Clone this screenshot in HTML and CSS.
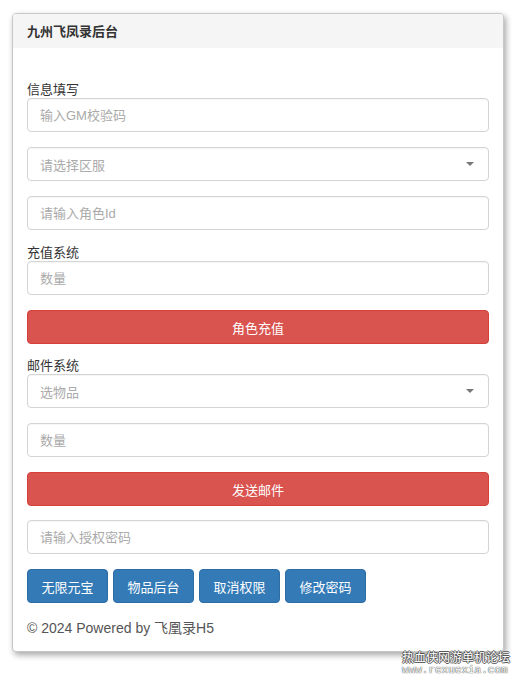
FILE: index.html
```html
<!DOCTYPE html>
<html lang="zh-CN">
<head>
<meta charset="utf-8">
<title>九州飞凤录后台</title>
<link rel="stylesheet" href="styles.css">
</head>
<body>
<div class="panel">
  <div class="panel-heading">九州飞凤录后台</div>
  <div class="panel-body">
    <label class="label">信息填写</label>
    <input class="field" type="text" placeholder="输入GM校验码">
    <div class="field select"><span>请选择区服</span><span class="caret"></span></div>
    <input class="field" type="text" placeholder="请输入角色Id">

    <label class="label">充值系统</label>
    <input class="field" type="text" placeholder="数量">
    <button class="btn-red">角色充值</button>

    <label class="label">邮件系统</label>
    <div class="field select"><span>选物品</span><span class="caret"></span></div>
    <input class="field" type="text" placeholder="数量">
    <button class="btn-red">发送邮件</button>

    <input class="field" type="text" placeholder="请输入授权密码">
    <div class="btn-row">
      <button class="btn-blue">无限元宝</button>
      <button class="btn-blue">物品后台</button>
      <button class="btn-blue">取消权限</button>
      <button class="btn-blue">修改密码</button>
    </div>
    <div class="footer">© 2024 Powered by 飞凰录H5</div>
  </div>
</div>
<div class="watermark">
  <div class="wm1">热血侠网游单机论坛</div>
  <div class="wm2">www.rexuexia.com</div>
</div>
</body>
</html>
```
FILE: styles.css
```css
html, body {
  margin: 0;
  padding: 0;
  background: #fff;
}
body {
  font-family: "Liberation Sans", "Noto Sans CJK SC", sans-serif;
  font-size: 13px;
  color: #333;
  padding: 13px 18px 0 12px;
  height: 685px;
  box-sizing: border-box;
  position: relative;
  overflow: hidden;
}
.panel {
  border: 1px solid #c8c8c8;
  border-radius: 4px;
  box-shadow: 2px 3px 6px rgba(0, 0, 0, 0.35);
  background: #fff;
  overflow: hidden;
}
.panel-heading {
  background: #f5f5f5;
  height: 34px;
  line-height: 36px;
  padding: 0 14px;
  font-weight: bold;
  font-size: 13px;
  color: #333;
}
.panel-body {
  display: flex;
  flex-direction: column;
  padding: 34px 14px 13px 14px;
}
.label {
  display: block;
  height: 16px;
  line-height: 16px;
  font-size: 13px;
  color: #333;
}
.field {
  box-sizing: border-box;
  height: 34px;
  width: 100%;
  border: 1px solid #d4d4d4;
  border-radius: 4px;
  padding: 0 12px;
  margin: 0 0 15px 0;
  font-family: "Liberation Sans", "Noto Sans CJK SC", sans-serif;
  font-size: 13px;
  color: #555;
  background: #fff;
  box-shadow: inset 0 1px 1px rgba(0, 0, 0, 0.04);
  outline: none;
}
.field::placeholder {
  color: #aaa;
}
.select {
  display: flex;
  align-items: center;
  justify-content: space-between;
  color: #aaa;
  padding-right: 14px;
}
.caret {
  width: 0;
  height: 0;
  border-left: 4px solid transparent;
  border-right: 4px solid transparent;
  border-top: 4px solid #777;
}
.btn-red {
  height: 34px;
  border: 1px solid #d43f3a;
  border-radius: 4px;
  background: #d9534f;
  color: #fff;
  font-family: "Liberation Sans", "Noto Sans CJK SC", sans-serif;
  font-size: 13px;
  margin: 0 0 14px 0;
  padding: 0;
}
.btn-row {
  display: flex;
  gap: 5px;
}
.btn-blue {
  height: 34px;
  width: 81px;
  border: 1px solid #2e6da4;
  border-radius: 4px;
  background: #337ab7;
  color: #fff;
  font-family: "Liberation Sans", "Noto Sans CJK SC", sans-serif;
  font-size: 13px;
  padding: 0;
}
.footer {
  margin-top: 15px;
  line-height: 20px;
  font-size: 14px;
  color: #555;
}
.watermark {
  position: absolute;
  left: 402px;
  top: 649px;
  color: #fff;
  text-shadow: -1px 0 #555, 1px 0 #555, 0 -1px #555, 0 1px #555;
}
.wm1 {
  font-family: "Noto Sans CJK SC", sans-serif;
  font-size: 12px;
  line-height: 16px;
}
.wm2 {
  font-family: "Liberation Mono", monospace;
  font-size: 11px;
  line-height: 11px;
  text-shadow: 0 0 1px #444, 0 0 1px #444;
}
```
